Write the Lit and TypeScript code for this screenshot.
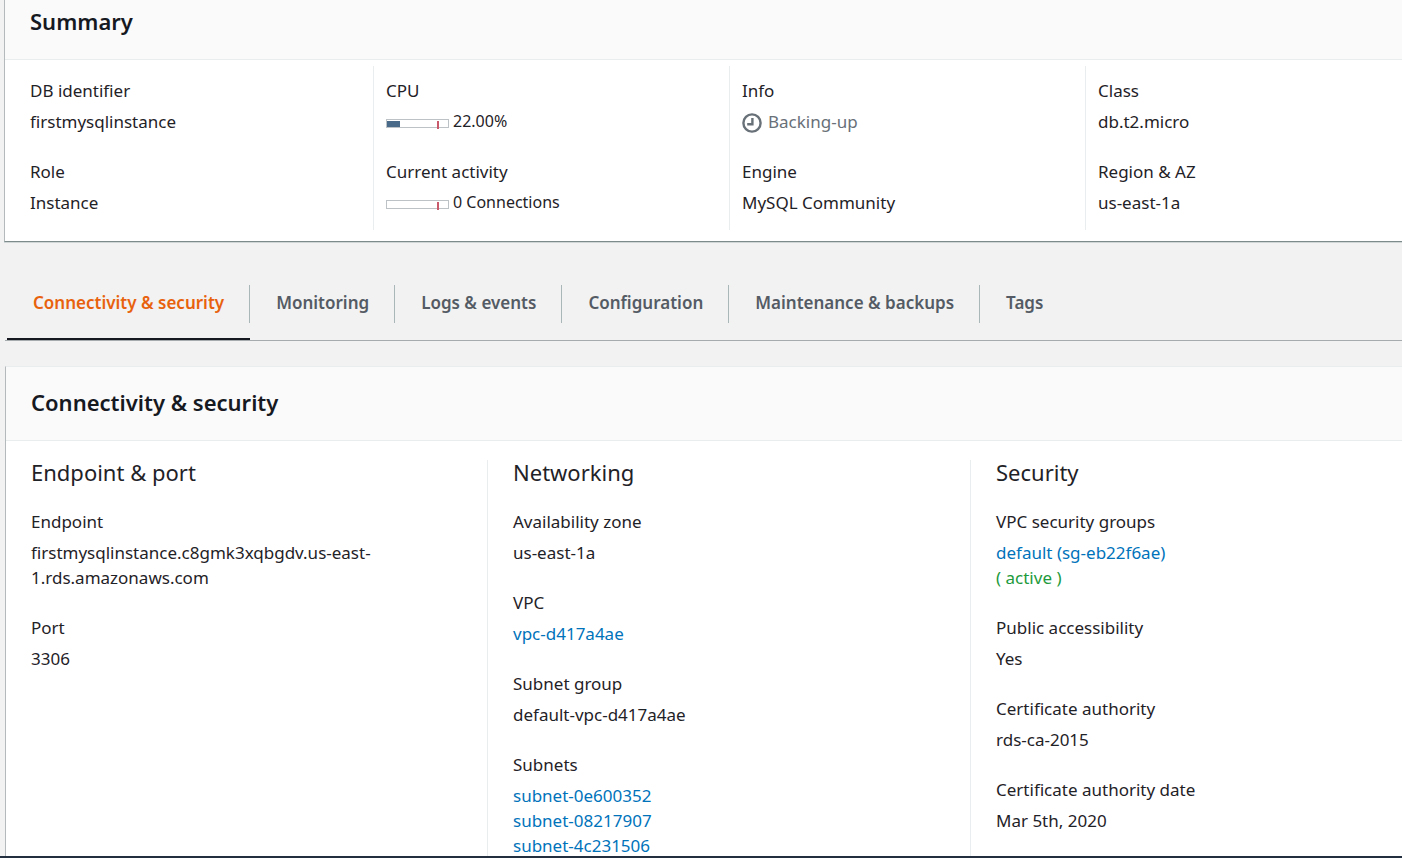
import { LitElement, html, css, type TemplateResult } from "lit";
import { customElement, property, state } from "lit/decorators.js";

/** Label with one or more value lines below it. */
@customElement("key-value")
class KeyValue extends LitElement {
  @property() label = "";

  static styles = css`
    :host {
      display: block;
    }
    .pair,
    .value {
      margin: 0;
    }
    .value {
      margin-top: 6px;
    }
  `;

  render() {
    return html`
      <dl class="pair">
        <dt>${this.label}</dt>
        <dd class="value"><slot></slot></dd>
      </dl>
    `;
  }
}

/** Small usage bar with a threshold mark and a caption. */
@customElement("usage-meter")
class UsageMeter extends LitElement {
  @property({ type: Number }) value = 0;
  @property() caption = "";

  static styles = css`
    :host {
      display: flex;
      align-items: center;
      gap: 4px;
      font-size: 16px;
    }
    .track {
      position: relative;
      box-sizing: border-box;
      width: 63px;
      height: 9px;
      margin-top: 4px;
      padding-top: 1px;
      border: 1px solid #bcc2c5;
    }
    .fill {
      height: 6px;
      background: #4a6a8a;
    }
    .mark {
      position: absolute;
      top: 1px;
      left: 50px;
      width: 2px;
      height: 8px;
      background: #c85a6c;
    }
  `;

  render() {
    return html`
      <div
        class="track"
        role="meter"
        aria-label=${this.caption}
        aria-valuemin="0"
        aria-valuemax="100"
        aria-valuenow=${this.value}
      >
        <div class="fill" style="width:${this.value}%"></div>
        <div class="mark"></div>
      </div>
      <span>${this.caption}</span>
    `;
  }
}

const TABS = [
  "Connectivity & security",
  "Monitoring",
  "Logs & events",
  "Configuration",
  "Maintenance & backups",
  "Tags",
];

const SUBNETS = ["subnet-0e600352", "subnet-08217907", "subnet-4c231506"];

@customElement("app-root")
class AppRoot extends LitElement {
  @state() private active = 0;

  static styles = css`
    :host {
      display: block;
      box-sizing: border-box;
      height: 100vh;
      overflow: hidden;
      border-bottom: 2px solid #232f3e;
      background: #f2f2f2;
      color: #1f2227;
      font-family: "Noto Sans", "Open Sans", sans-serif;
      font-size: 17px;
      line-height: 25px;
    }
    h2,
    h3 {
      margin: 0;
    }
    a {
      color: #0073bb;
      text-decoration: none;
    }
    a:hover {
      text-decoration: underline;
    }
    .panel {
      background: #fff;
      border-left: 1px solid #b4babb;
    }
    .summary {
      margin-left: 4px;
      border-bottom: 1px solid #7d8c8b;
      box-shadow: 0 1px 0 #d0d6d5;
    }
    .details {
      margin: 25px 0 0 5px;
      border-top: 1px solid #eaeded;
    }
    .panel-head {
      padding: 19px 25px 21px;
      background: #fafafa;
      border-bottom: 1px solid #eaeded;
    }
    .summary .panel-head {
      padding-top: 5px;
    }
    .panel-head h2 {
      color: #16191f;
      font-size: 22px;
      font-weight: 600;
      line-height: 33px;
    }
    .grid {
      display: grid;
    }
    .summary .grid {
      grid-template-columns: 368fr 356fr 356fr 317fr;
      padding: 6px 0 11px;
    }
    .details .grid {
      grid-template-columns: 481fr 483fr 432fr;
      padding: 19px 0;
    }
    .col {
      display: flex;
      flex-direction: column;
      gap: 25px;
      padding: 0 25px;
      min-width: 0;
    }
    .col + .col {
      padding-left: 12px;
      border-left: 1px solid #eaeded;
    }
    .summary .col {
      padding-top: 12px;
      padding-bottom: 15px;
    }
    .details .col + .col {
      padding-left: 25px;
    }
    .col h3 {
      font-size: 22px;
      font-weight: 400;
      line-height: 24px;
    }
    .lines {
      display: flex;
      flex-direction: column;
      align-items: flex-start;
    }
    .endpoint {
      display: block;
      max-width: 350px;
    }
    .active-group {
      color: #1d9a3c;
    }
    .pending {
      display: flex;
      align-items: center;
      gap: 6px;
      color: #687078;
    }
    .pending svg {
      width: 20px;
      height: 20px;
      margin-top: 2px;
    }
    .tabs {
      display: flex;
      margin: 35px 0 0 5px;
      padding-left: 2px;
      border-bottom: 1px solid #a6abae;
    }
    .tab {
      display: flex;
      padding: 8px 0 15px;
      border: 0;
      border-bottom: 2px solid transparent;
      background: none;
      color: #545b64;
      font: inherit;
      font-weight: 600;
      cursor: pointer;
    }
    .tab span {
      padding: 5px 25px 8px 26px;
      border-right: 1px solid #aab7b8;
    }
    .tab:last-child span {
      border-right: 0;
    }
    .tab.selected {
      color: #e8620d;
      border-bottom-color: #16191f;
    }
  `;

  private renderTab(name: string, index: number): TemplateResult {
    const selected = index === this.active;
    return html`<button
      class=${selected ? "tab selected" : "tab"}
      role="tab"
      aria-selected=${selected}
      @click=${() => (this.active = index)}
    ><span>${name}</span></button>`;
  }

  render() {
    return html`
      <section class="panel summary">
        <header class="panel-head"><h2>Summary</h2></header>
        <div class="grid">
          <div class="col">
            <key-value label="DB identifier">firstmysqlinstance</key-value>
            <key-value label="Role">Instance</key-value>
          </div>
          <div class="col">
            <key-value label="CPU">
              <usage-meter value="22" caption="22.00%"></usage-meter>
            </key-value>
            <key-value label="Current activity">
              <usage-meter value="0" caption="0 Connections"></usage-meter>
            </key-value>
          </div>
          <div class="col">
            <key-value label="Info">
              <span class="pending">
                <svg viewBox="0 0 20 20" fill="none" stroke="currentColor" stroke-width="2.4" aria-hidden="true">
                  <circle cx="10" cy="10" r="8.6"></circle>
                  <path d="M10.4 5v6.2H5.2"></path>
                </svg>
                Backing-up
              </span>
            </key-value>
            <key-value label="Engine">MySQL Community</key-value>
          </div>
          <div class="col">
            <key-value label="Class">db.t2.micro</key-value>
            <key-value label="Region &amp; AZ">us-east-1a</key-value>
          </div>
        </div>
      </section>

      <nav class="tabs" role="tablist">${TABS.map((t, i) => this.renderTab(t, i))}</nav>

      <section class="panel details">
        <header class="panel-head"><h2>Connectivity &amp; security</h2></header>
        <div class="grid">
          <div class="col">
            <h3>Endpoint &amp; port</h3>
            <key-value label="Endpoint">
              <span class="endpoint">firstmysqlinstance.c8gmk3xqbgdv.us-east-<wbr>1.rds.amazonaws.com</span>
            </key-value>
            <key-value label="Port">3306</key-value>
          </div>
          <div class="col">
            <h3>Networking</h3>
            <key-value label="Availability zone">us-east-1a</key-value>
            <key-value label="VPC"><a href="#vpc">vpc-d417a4ae</a></key-value>
            <key-value label="Subnet group">default-vpc-d417a4ae</key-value>
            <key-value label="Subnets">
              <div class="lines">
                ${SUBNETS.map((s) => html`<a href="#${s}">${s}</a>`)}
              </div>
            </key-value>
          </div>
          <div class="col">
            <h3>Security</h3>
            <key-value label="VPC security groups">
              <div class="lines">
                <a href="#sg">default (sg-eb22f6ae)</a>
                <span class="active-group">( active )</span>
              </div>
            </key-value>
            <key-value label="Public accessibility">Yes</key-value>
            <key-value label="Certificate authority">rds-ca-2015</key-value>
            <key-value label="Certificate authority date">Mar 5th, 2020</key-value>
          </div>
        </div>
      </section>
    `;
  }
}
